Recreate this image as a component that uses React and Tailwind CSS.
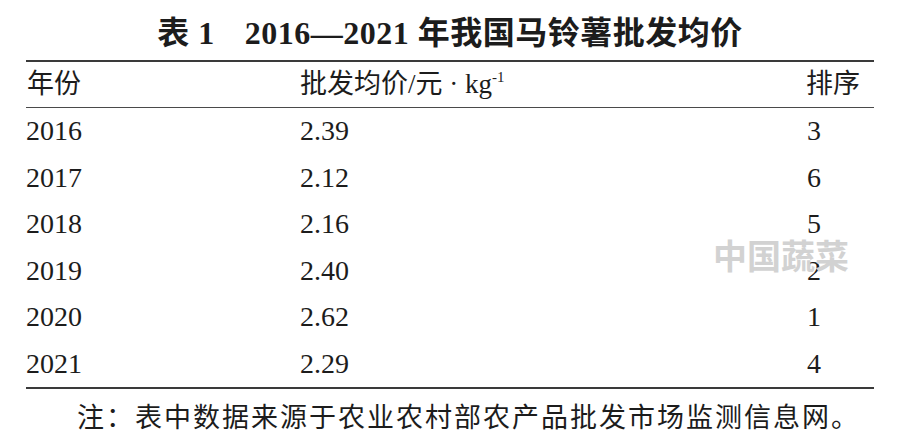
import React from 'react';

const serif = "font-['Liberation_Serif','Noto_Sans_CJK_SC',serif]";

const rows = [
  { year: '2016', price: '2.39', rank: '3' },
  { year: '2017', price: '2.12', rank: '6' },
  { year: '2018', price: '2.16', rank: '5' },
  { year: '2019', price: '2.40', rank: '2' },
  { year: '2020', price: '2.62', rank: '1' },
  { year: '2021', price: '2.29', rank: '4' },
];

export default function App() {
  return (
    <div className={`relative w-[900px] h-[442px] bg-white text-[#1c1c1c] ${serif} overflow-hidden`}>
      {/* Title */}
      <div className="h-[60px] flex items-center justify-center pt-[6px]">
        <h1 className="text-[32px] font-bold leading-none tracking-[0.5px]">
          表 1<span className="inline-block w-[30px]"></span>2016—2021 年我国马铃薯批发均价
        </h1>
      </div>

      {/* Table */}
      <div className="mx-[26px] border-t-2 border-b-2 border-[#3a3a3a]">
        <div className="grid grid-cols-[274px_506px_1fr] h-[46px] items-center border-b-[1.5px] border-[#4a4a4a] text-[27px] leading-none">
          <div className="pl-[1px]">年份</div>
          <div>
            批发均价/元 · kg<sup className="text-[15px] relative -top-[11px] align-baseline">-1</sup>
          </div>
          <div>排序</div>
        </div>
        {rows.map((r) => (
          <div key={r.year} className="grid grid-cols-[274px_506px_1fr] h-[46.5px] items-center text-[28px] leading-none">
            <div>{r.year}</div>
            <div>{r.price}</div>
            <div className="pl-[1px]">{r.rank}</div>
          </div>
        ))}
      </div>

      {/* Note */}
      <div className="pl-[77px] pt-[16px] text-[27px] leading-none tracking-[2px]">
        注：表中数据来源于农业农村部农产品批发市场监测信息网。
      </div>

      {/* Watermark */}
      <div className="absolute left-[713px] top-[238px] text-[34px] font-bold leading-none text-[#d2d2d2] font-['Noto_Sans_CJK_SC',sans-serif]">
        中国蔬菜
      </div>
    </div>
  );
}
